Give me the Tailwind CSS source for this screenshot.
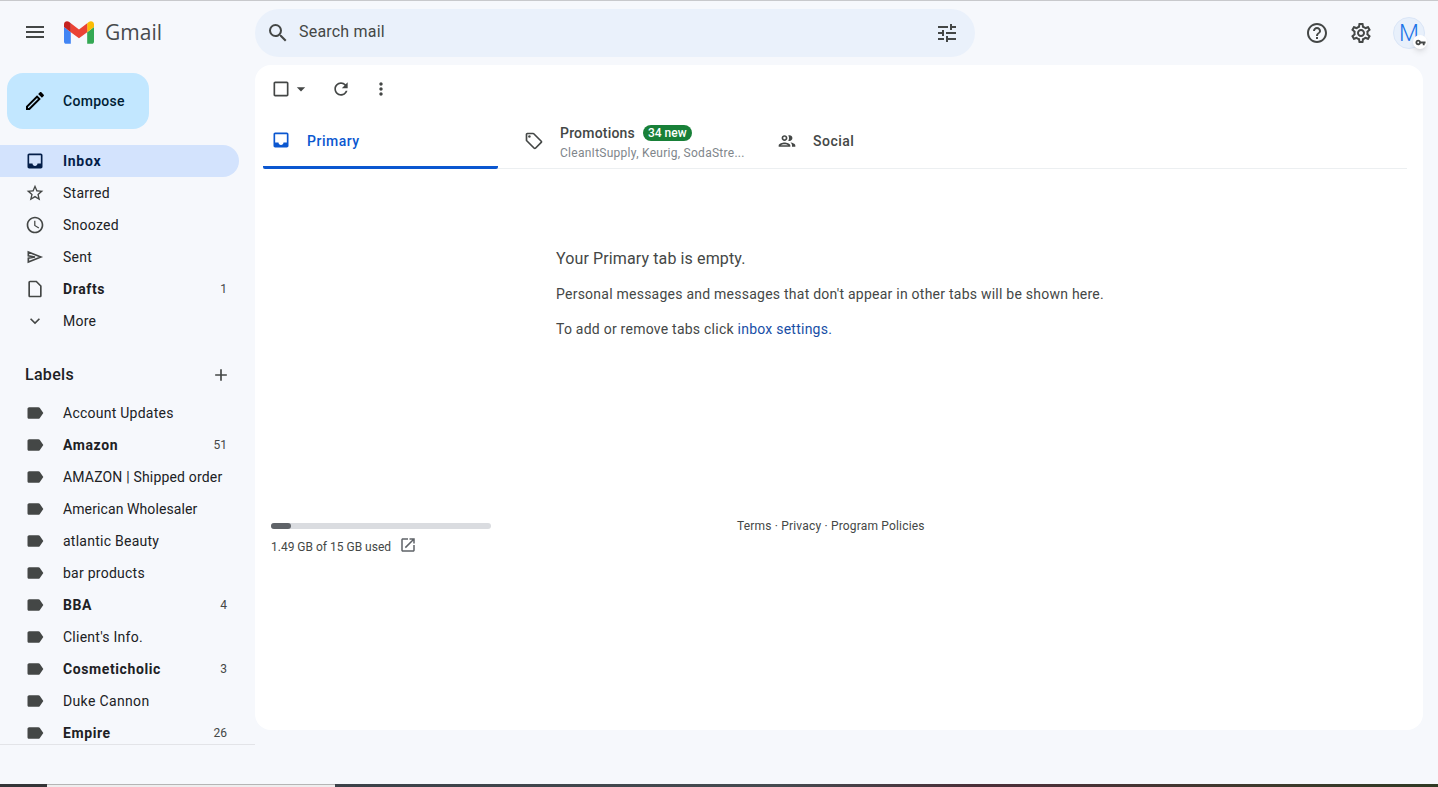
<!DOCTYPE html>
<html lang="en">
  <head>
    <meta charset="UTF-8" />
    <meta name="viewport" content="width=device-width, initial-scale=1.0" />
    <title>Inbox - Gmail</title>
    <script src="https://cdn.jsdelivr.net/npm/@tailwindcss/browser@4"></script>
  </head>
  <body class="w-[1438px] h-[787px] overflow-hidden flex flex-col bg-[#f6f8fc] text-[#202124] text-sm [font-family:Roboto,sans-serif]">
    <div class="h-px shrink-0 bg-[#c8c9cc]"></div>

    <!-- top bar -->
    <header class="h-[64px] shrink-0 flex items-center">
      <div class="w-[255px] shrink-0 flex items-center pl-[23px]">
        <svg class="w-6 h-6 -mt-[2px] fill-[#444746]" viewBox="0 0 24 24"><path d="M3 18h18v-2H3v2zm0-5h18v-2H3v2zm0-7v2h18V6H3z" /></svg>
        <svg class="w-[30px] h-[23px] ml-[17px] -mt-[2px]" viewBox="52 42 88 66">
          <path fill="#4285f4" d="M58 108h14V74L52 59v43c0 3.32 2.69 6 6 6" />
          <path fill="#34a853" d="M120 108h14c3.32 0 6-2.69 6-6V59l-20 15" />
          <path fill="#fbbc04" d="M120 48v26l20-15v-8c0-7.42-8.47-11.65-14.4-7.2" />
          <path fill="#ea4335" d="M72 74V48l24 18 24-18v26L96 92" />
          <path fill="#c5221f" d="M52 51v8l20 15V48l-5.6-4.2c-5.94-4.45-14.4-.22-14.4 7.2" />
        </svg>
        <span class="ml-[11px] -mt-[2px] text-[21px] leading-6 text-[#474a4d] [font-family:'Open_Sans',sans-serif]">Gmail</span>
      </div>

      <div class="w-[720px] h-[48px] flex items-center rounded-full bg-[#eaf1fb] pl-[11px] pr-[16px]">
        <svg class="w-6 h-6 fill-[#444746]" viewBox="0 0 24 24"><path d="M15.5 14h-.79l-.28-.27A6.471 6.471 0 0 0 16 9.5 6.5 6.5 0 1 0 9.5 16c1.61 0 3.09-.59 4.23-1.57l.27.28v.79l5 4.99L20.49 19l-4.99-5zm-6 0C7.01 14 5 11.99 5 9.5S7.01 5 9.5 5 14 7.01 14 9.5 11.99 14 9.5 14z" /></svg>
        <span class="ml-[9px] -mt-[2px] text-base tracking-[0.2px] text-[#444746]">Search mail</span>
        <svg class="w-6 h-6 ml-auto fill-[#444746]" viewBox="0 0 24 24"><path d="M3 17v2h6v-2H3zM3 5v2h10V5H3zm10 16v-2h8v-2h-8v-2h-2v6h2zM7 9v2H3v2h4v2h2V9H7zm14 4v-2H11v2h10zm-6-4h2V7h4V5h-4V3h-2v6z" /></svg>
      </div>

      <div class="ml-auto pr-[13px] flex items-center gap-5">
        <svg class="w-6 h-6 fill-[#444746]" viewBox="0 0 24 24"><path d="M11 18h2v-2h-2v2zm1-16C6.48 2 2 6.48 2 12s4.48 10 10 10 10-4.48 10-10S17.52 2 12 2zm0 18c-4.41 0-8-3.59-8-8s3.59-8 8-8 8 3.59 8 8-3.59 8-8 8zm0-14c-2.21 0-4 1.79-4 4h2c0-1.1.9-2 2-2s2 .9 2 2c0 2-3 1.75-3 5h2c0-2.25 3-2.5 3-5 0-2.21-1.79-4-4-4z" /></svg>
        <svg class="w-6 h-6 fill-[#444746]" viewBox="0 0 24 24"><path d="M19.43 12.98c.04-.32.07-.64.07-.98 0-.34-.03-.66-.07-.98l2.11-1.65c.19-.15.24-.42.12-.64l-2-3.46c-.09-.16-.26-.25-.44-.25-.06 0-.12.01-.17.03l-2.49 1c-.52-.4-1.08-.73-1.69-.98l-.38-2.65C14.46 2.18 14.25 2 14 2h-4c-.25 0-.46.18-.49.42l-.38 2.65c-.61.25-1.17.59-1.69.98l-2.49-1c-.06-.02-.12-.03-.18-.03-.17 0-.34.09-.43.25l-2 3.46c-.13.22-.07.49.12.64l2.11 1.65c-.04.32-.07.65-.07.98 0 .33.03.66.07.98l-2.11 1.65c-.19.15-.24.42-.12.64l2 3.46c.09.16.26.25.44.25.06 0 .12-.01.17-.03l2.49-1c.52.4 1.08.73 1.69.98l.38 2.65c.03.24.24.42.49.42h4c.25 0 .46-.18.49-.42l.38-2.65c.61-.25 1.17-.59 1.69-.98l2.49 1c.06.02.12.03.18.03.17 0 .34-.09.43-.25l2-3.46c.12-.22.07-.49-.12-.64l-2.11-1.65zm-1.98-1.71c.04.31.05.52.05.73 0 .21-.02.43-.05.73l-.14 1.13.89.7 1.08.84-.7 1.21-1.27-.51-1.04-.42-.9.68c-.43.32-.84.56-1.25.73l-1.06.43-.16 1.13-.2 1.35h-1.4l-.19-1.35-.16-1.13-1.06-.43c-.43-.18-.83-.41-1.23-.71l-.91-.7-1.06.43-1.27.51-.7-1.21 1.08-.84.89-.7-.14-1.13c-.03-.31-.05-.54-.05-.74s.02-.43.05-.73l.14-1.13-.89-.7-1.08-.84.7-1.21 1.27.51 1.04.42.9-.68c.43-.32.84-.56 1.25-.73l1.06-.43.16-1.13.2-1.35h1.39l.19 1.35.16 1.13 1.06.43c.43.18.83.41 1.23.71l.91.7 1.06-.43 1.27-.51.7 1.21-1.07.85-.89.7.14 1.13zM12 8c-2.21 0-4 1.79-4 4s1.79 4 4 4 4-1.79 4-4-1.79-4-4-4zm0 6c-1.1 0-2-.9-2-2s.9-2 2-2 2 .9 2 2-.9 2-2 2z" /></svg>
        <div class="relative w-8 h-8 flex items-center justify-center rounded-full border border-[#dbe6f7] bg-[#e8f0fb] text-[#1a73e8] text-[23px] font-light leading-none">
          M
          <span class="absolute -right-[3px] -bottom-[1px] w-[14px] h-[14px] flex items-center justify-center rounded-full bg-white shadow-md">
            <svg class="w-[11px] h-[11px] fill-[#444746]" viewBox="0 0 24 24"><path d="M12.65 10C11.83 7.67 9.61 6 7 6c-3.31 0-6 2.69-6 6s2.69 6 6 6c2.61 0 4.83-1.67 5.65-4H17v4h4v-4h2v-4H12.65zM7 14c-1.1 0-2-.9-2-2s.9-2 2-2 2 .9 2 2-.9 2-2 2z" /></svg>
          </span>
        </div>
      </div>
    </header>

    <div class="flex-1 min-h-0 flex items-start">
      <!-- sidebar -->
      <aside class="w-[255px] h-[680px] shrink-0 overflow-hidden border-b border-[#e3e4e8] pt-2">
        <div class="ml-[7px] w-[142px] h-[56px] flex items-center rounded-2xl bg-[#c2e7ff] pl-4 text-[#001d35] font-medium tracking-[0.3px]">
          <svg class="w-6 h-6 fill-black" viewBox="0 0 24 24"><path d="M14.06 9.02l.92.92L5.92 19H5v-.92l9.06-9.06M17.66 3c-.25 0-.51.1-.7.29l-1.83 1.83 3.75 3.75 1.83-1.83c.39-.39.39-1.02 0-1.41l-2.34-2.34c-.2-.2-.45-.29-.71-.29zm-3.6 3.19L3 17.25V21h3.75L17.81 9.94l-3.75-3.75z" /></svg>
          <span class="ml-4">Compose</span>
        </div>

        <nav class="mt-4 w-[239px] tracking-[0.25px]">
          <a class="h-8 flex items-center pl-[25px] pr-3 rounded-r-full bg-[#d3e3fd] font-bold tracking-[0.7px] text-[#041e49]">
            <svg class="w-5 h-5 fill-[#041e49]" viewBox="0 0 24 24"><path d="M19 3H4.99c-1.11 0-1.98.89-1.98 2L3 19c0 1.1.88 2 1.99 2H19c1.1 0 2-.9 2-2V5c0-1.11-.9-2-2-2zm0 12h-4c0 1.66-1.35 3-3 3s-3-1.34-3-3H4.99V5H19v10z" /></svg>
            <span class="ml-[18px]">Inbox</span>
          </a>
          <a class="h-8 flex items-center pl-[25px] pr-3">
            <svg class="w-5 h-5 fill-[#444746]" viewBox="0 0 24 24"><path d="M22 9.24l-7.19-.62L12 2 9.19 8.63 2 9.24l5.46 4.73L5.82 21 12 17.27 18.18 21l-1.63-7.03L22 9.24zM12 15.4l-3.76 2.27 1-4.28-3.32-2.88 4.38-.38L12 6.1l1.71 4.04 4.38.38-3.32 2.88 1 4.28L12 15.4z" /></svg>
            <span class="ml-[18px]">Starred</span>
          </a>
          <a class="h-8 flex items-center pl-[25px] pr-3">
            <svg class="w-5 h-5 fill-[#444746]" viewBox="0 0 24 24"><path d="M11.99 2C6.47 2 2 6.48 2 12s4.47 10 9.99 10C17.52 22 22 17.52 22 12S17.52 2 11.99 2zM12 20c-4.42 0-8-3.58-8-8s3.58-8 8-8 8 3.58 8 8-3.58 8-8 8zm.5-13H11v6l5.25 3.15.75-1.23-4.5-2.67z" /></svg>
            <span class="ml-[18px]">Snoozed</span>
          </a>
          <a class="h-8 flex items-center pl-[25px] pr-3">
            <svg class="w-5 h-5 fill-none stroke-[#444746] stroke-2" viewBox="0 0 24 24"><path d="M4 6l15 6-15 6v-4.5l8-1.5-8-1.5z" /></svg>
            <span class="ml-[18px]">Sent</span>
          </a>
          <a class="h-8 flex items-center pl-[25px] pr-3 font-bold tracking-[0.6px]">
            <svg class="w-5 h-5 fill-[#444746]" viewBox="0 0 24 24"><path d="M14 2H6c-1.1 0-2 .9-2 2v16c0 1.1.9 2 2 2h12c1.1 0 2-.9 2-2V8l-6-6zm4 18H6V4h7.17L18 8.83V20z" /></svg>
            <span class="ml-[18px]">Drafts</span>
            <span class="ml-auto text-xs font-normal tracking-normal text-[#444746]">1</span>
          </a>
          <a class="h-8 flex items-center pl-[25px] pr-3">
            <svg class="w-5 h-5 fill-[#444746]" viewBox="0 0 24 24"><path d="M16.59 8.59L12 13.17 7.41 8.59 6 10l6 6 6-6z" /></svg>
            <span class="ml-[18px]">More</span>
          </a>
        </nav>

        <div class="mt-[22px] mb-[6px] w-[239px] h-8 flex items-center pl-[25px] pr-2">
          <span class="text-base font-medium tracking-[0.3px]">Labels</span>
          <svg class="w-5 h-5 ml-auto fill-[#444746]" viewBox="0 0 24 24"><path d="M19 13h-6v6h-2v-6H5v-2h6V5h2v6h6v2z" /></svg>
        </div>

        <nav class="w-[239px] tracking-[0.25px]">
          <a class="h-8 flex items-center pl-[25px] pr-3">
            <svg class="w-5 h-5 fill-[#444746]" viewBox="0 0 24 24"><path d="M17.63 5.84C17.27 5.33 16.67 5 16 5L5 5.01C3.9 5.01 3 5.9 3 7v10c0 1.1.9 1.99 2 1.99L16 19c.67 0 1.27-.33 1.63-.84L22 12l-4.37-6.16z" /></svg>
            <span class="ml-[18px]">Account Updates</span>
          </a>
          <a class="h-8 flex items-center pl-[25px] pr-3 font-bold tracking-[0.6px]">
            <svg class="w-5 h-5 fill-[#444746]" viewBox="0 0 24 24"><path d="M17.63 5.84C17.27 5.33 16.67 5 16 5L5 5.01C3.9 5.01 3 5.9 3 7v10c0 1.1.9 1.99 2 1.99L16 19c.67 0 1.27-.33 1.63-.84L22 12l-4.37-6.16z" /></svg>
            <span class="ml-[18px]">Amazon</span>
            <span class="ml-auto text-xs font-normal tracking-normal text-[#444746]">51</span>
          </a>
          <a class="h-8 flex items-center pl-[25px] pr-3">
            <svg class="w-5 h-5 fill-[#444746]" viewBox="0 0 24 24"><path d="M17.63 5.84C17.27 5.33 16.67 5 16 5L5 5.01C3.9 5.01 3 5.9 3 7v10c0 1.1.9 1.99 2 1.99L16 19c.67 0 1.27-.33 1.63-.84L22 12l-4.37-6.16z" /></svg>
            <span class="ml-[18px] tracking-[0.18px]">AMAZON | Shipped order</span>
          </a>
          <a class="h-8 flex items-center pl-[25px] pr-3">
            <svg class="w-5 h-5 fill-[#444746]" viewBox="0 0 24 24"><path d="M17.63 5.84C17.27 5.33 16.67 5 16 5L5 5.01C3.9 5.01 3 5.9 3 7v10c0 1.1.9 1.99 2 1.99L16 19c.67 0 1.27-.33 1.63-.84L22 12l-4.37-6.16z" /></svg>
            <span class="ml-[18px] tracking-[0.1px]">American Wholesaler</span>
          </a>
          <a class="h-8 flex items-center pl-[25px] pr-3">
            <svg class="w-5 h-5 fill-[#444746]" viewBox="0 0 24 24"><path d="M17.63 5.84C17.27 5.33 16.67 5 16 5L5 5.01C3.9 5.01 3 5.9 3 7v10c0 1.1.9 1.99 2 1.99L16 19c.67 0 1.27-.33 1.63-.84L22 12l-4.37-6.16z" /></svg>
            <span class="ml-[18px]">atlantic Beauty</span>
          </a>
          <a class="h-8 flex items-center pl-[25px] pr-3">
            <svg class="w-5 h-5 fill-[#444746]" viewBox="0 0 24 24"><path d="M17.63 5.84C17.27 5.33 16.67 5 16 5L5 5.01C3.9 5.01 3 5.9 3 7v10c0 1.1.9 1.99 2 1.99L16 19c.67 0 1.27-.33 1.63-.84L22 12l-4.37-6.16z" /></svg>
            <span class="ml-[18px]">bar products</span>
          </a>
          <a class="h-8 flex items-center pl-[25px] pr-3 font-bold tracking-[0.6px]">
            <svg class="w-5 h-5 fill-[#444746]" viewBox="0 0 24 24"><path d="M17.63 5.84C17.27 5.33 16.67 5 16 5L5 5.01C3.9 5.01 3 5.9 3 7v10c0 1.1.9 1.99 2 1.99L16 19c.67 0 1.27-.33 1.63-.84L22 12l-4.37-6.16z" /></svg>
            <span class="ml-[18px]">BBA</span>
            <span class="ml-auto text-xs font-normal tracking-normal text-[#444746]">4</span>
          </a>
          <a class="h-8 flex items-center pl-[25px] pr-3">
            <svg class="w-5 h-5 fill-[#444746]" viewBox="0 0 24 24"><path d="M17.63 5.84C17.27 5.33 16.67 5 16 5L5 5.01C3.9 5.01 3 5.9 3 7v10c0 1.1.9 1.99 2 1.99L16 19c.67 0 1.27-.33 1.63-.84L22 12l-4.37-6.16z" /></svg>
            <span class="ml-[18px]">Client's Info.</span>
          </a>
          <a class="h-8 flex items-center pl-[25px] pr-3 font-bold tracking-[0.6px]">
            <svg class="w-5 h-5 fill-[#444746]" viewBox="0 0 24 24"><path d="M17.63 5.84C17.27 5.33 16.67 5 16 5L5 5.01C3.9 5.01 3 5.9 3 7v10c0 1.1.9 1.99 2 1.99L16 19c.67 0 1.27-.33 1.63-.84L22 12l-4.37-6.16z" /></svg>
            <span class="ml-[18px]">Cosmeticholic</span>
            <span class="ml-auto text-xs font-normal tracking-normal text-[#444746]">3</span>
          </a>
          <a class="h-8 flex items-center pl-[25px] pr-3">
            <svg class="w-5 h-5 fill-[#444746]" viewBox="0 0 24 24"><path d="M17.63 5.84C17.27 5.33 16.67 5 16 5L5 5.01C3.9 5.01 3 5.9 3 7v10c0 1.1.9 1.99 2 1.99L16 19c.67 0 1.27-.33 1.63-.84L22 12l-4.37-6.16z" /></svg>
            <span class="ml-[18px] tracking-[0.35px]">Duke Cannon</span>
          </a>
          <a class="h-8 flex items-center pl-[25px] pr-3 font-bold tracking-[0.6px]">
            <svg class="w-5 h-5 fill-[#444746]" viewBox="0 0 24 24"><path d="M17.63 5.84C17.27 5.33 16.67 5 16 5L5 5.01C3.9 5.01 3 5.9 3 7v10c0 1.1.9 1.99 2 1.99L16 19c.67 0 1.27-.33 1.63-.84L22 12l-4.37-6.16z" /></svg>
            <span class="ml-[18px]">Empire</span>
            <span class="ml-auto text-xs font-normal tracking-normal text-[#444746]">26</span>
          </a>
        </nav>
      </aside>

      <!-- main card -->
      <main class="w-[1168px] h-[665px] shrink-0 rounded-2xl bg-white">
        <div class="h-12 flex items-center pl-4">
          <svg class="w-5 h-5 fill-[#444746]" viewBox="0 0 24 24"><path d="M19 5v14H5V5h14m0-2H5c-1.1 0-2 .9-2 2v14c0 1.1.9 2 2 2h14c1.1 0 2-.9 2-2V5c0-1.1-.9-2-2-2z" /></svg>
          <svg class="w-5 h-5 fill-[#444746]" viewBox="0 0 24 24"><path d="M7 10l5 5 5-5z" /></svg>
          <svg class="w-5 h-5 ml-5 fill-[#444746]" viewBox="0 0 24 24"><path d="M17.65 6.35C16.2 4.9 14.21 4 12 4c-4.42 0-7.99 3.58-7.99 8s3.57 8 7.99 8c3.73 0 6.84-2.55 7.73-6h-2.08c-.82 2.33-3.04 4-5.65 4-3.31 0-6-2.69-6-6s2.69-6 6-6c1.66 0 3.14.69 4.22 1.78L13 11h7V4l-2.35 2.35z" /></svg>
          <svg class="w-5 h-5 ml-5 fill-[#444746]" viewBox="0 0 24 24"><path d="M12 8c1.1 0 2-.9 2-2s-.9-2-2-2-2 .9-2 2 .9 2 2 2zm0 2c-1.1 0-2 .9-2 2s.9 2 2 2 2-.9 2-2-.9-2-2-2zm0 6c-1.1 0-2 .9-2 2s.9 2 2 2 2-.9 2-2-.9-2-2-2z" /></svg>
        </div>

        <div class="ml-2 mr-4 h-[56px] flex items-start border-b border-[#eceff1]">
          <div class="w-[235px] h-[56px] flex items-center pl-2 pt-[2px] border-b-[3px] border-[#0b57d0] rounded-b-[2px] font-medium tracking-[0.5px] text-[#0b57d0]">
            <svg class="w-5 h-5 -mt-[2px] fill-[#0b57d0]" viewBox="0 0 24 24"><path d="M19 3H4.99c-1.11 0-1.98.89-1.98 2L3 19c0 1.1.88 2 1.99 2H19c1.1 0 2-.9 2-2V5c0-1.11-.9-2-2-2zm0 12h-4c0 1.66-1.35 3-3 3s-3-1.34-3-3H4.99V5H19v10z" /></svg>
            <span class="ml-4">Primary</span>
          </div>
          <div class="w-[255px] h-[55px] flex items-center pl-[26px]">
            <svg class="w-5 h-5 fill-[#444746]" viewBox="0 0 24 24"><path d="M21.41 11.58l-9-9C12.05 2.22 11.55 2 11 2H4c-1.1 0-2 .9-2 2v7c0 .55.22 1.05.59 1.42l9 9c.36.36.86.58 1.41.58s1.05-.22 1.41-.59l7-7c.37-.36.59-.86.59-1.41s-.23-1.06-.59-1.42zM13 20.01L4 11V4h7v-.01l9 8.99-7 7.02z" /><circle cx="6.5" cy="6.5" r="1.5" /></svg>
            <div class="ml-4 pt-1">
              <div class="flex items-center h-4">
                <span class="font-medium tracking-[0.2px] text-[#444746]">Promotions</span>
                <span class="ml-2 h-4 px-[5px] flex items-center rounded-full bg-[#188038] text-xs font-medium text-white">34 new</span>
              </div>
              <div class="mt-1 text-xs leading-4 tracking-[0.27px] text-[#80868b]">CleanItSupply, Keurig, SodaStre...</div>
            </div>
          </div>
          <div class="h-[55px] flex items-center pl-6 font-medium tracking-[0.5px] text-[#444746]">
            <svg class="w-5 h-5 fill-[#444746]" viewBox="0 0 24 24"><path d="M9 13.75c-2.34 0-7 1.17-7 3.5V19h14v-1.75c0-2.33-4.66-3.5-7-3.5zM4.34 17c.84-.58 2.87-1.25 4.66-1.25s3.82.67 4.66 1.25H4.34zM9 12c1.93 0 3.5-1.57 3.5-3.5S10.93 5 9 5 5.5 6.57 5.5 8.5 7.07 12 9 12zm0-5c.83 0 1.5.67 1.5 1.5S9.83 10 9 10s-1.5-.67-1.5-1.5S8.17 7 9 7zm7.04 6.81c1.16.84 1.96 1.96 1.96 3.44V19h4v-1.75c0-2.02-3.5-3.17-5.96-3.44zM15 12c1.93 0 3.5-1.57 3.5-3.5S16.93 5 15 5c-.54 0-1.04.13-1.5.35.63.89 1 1.98 1 3.15s-.37 2.26-1 3.15c.46.22.96.35 1.5.35z" /></svg>
            <span class="ml-4">Social</span>
          </div>
        </div>

        <div class="pl-[301px] pt-[80px] text-[#444746] tracking-[0.24px]">
          <p class="text-base leading-5 tracking-[0.12px]">Your Primary tab is empty.</p>
          <p class="mt-[15px] leading-5">Personal messages and messages that don't appear in other tabs will be shown here.</p>
          <p class="mt-[15px] leading-5">To add or remove tabs click <a class="text-[#174ea6]">inbox settings.</a></p>
        </div>

        <div class="mt-[178px] pl-4 flex items-start text-xs text-[#444746]">
          <div class="w-[220px] pt-[6px]">
            <div class="h-[6px] rounded-full bg-[#dadce0]">
              <div class="w-5 h-[6px] rounded-full bg-[#5f6368]"></div>
            </div>
            <div class="mt-[10px] flex items-center">
              <span>1.49 GB of 15 GB used</span>
              <svg class="w-[18px] h-[18px] ml-2 -mt-[4px] fill-[#5f6368]" viewBox="0 0 24 24"><path d="M19 19H5V5h7V3H5c-1.11 0-2 .9-2 2v14c0 1.1.89 2 2 2h14c1.1 0 2-.9 2-2v-7h-2v7zM14 3v2h3.59l-9.83 9.83 1.41 1.41L19 6.41V10h2V3h-7z" /></svg>
            </div>
          </div>
          <div class="ml-[246px] pt-px leading-4 tracking-[0.18px]">Terms · Privacy · Program Policies</div>
        </div>
      </main>
    </div>

    <!-- edge of the window below -->
    <div class="h-[3px] shrink-0 flex">
      <div class="w-[47px] bg-[#333537]"></div>
      <div class="w-[288px] bg-[#eeeeee] border-t border-[#b5b5b5]"></div>
      <div class="flex-1 bg-[linear-gradient(90deg,#3b4148_0%,#454b50_40%,#4a2f38_58%,#4b3038_63%,#3d3a2c_85%,#2f3a24_100%)]"></div>
    </div>
  </body>
</html>
